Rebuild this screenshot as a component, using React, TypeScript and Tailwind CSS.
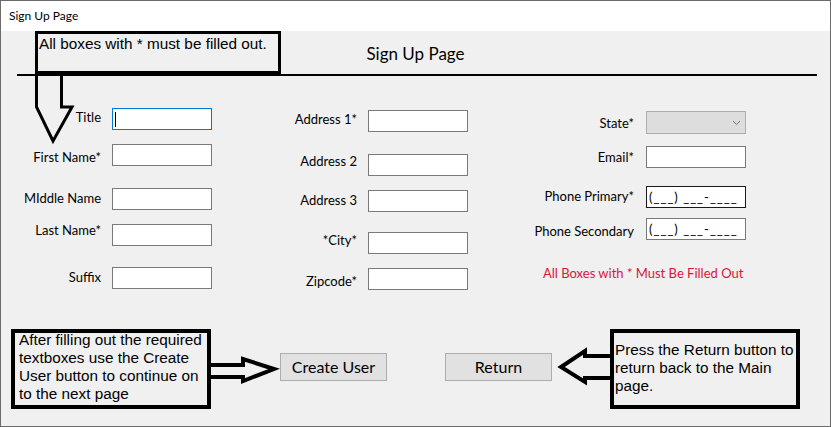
import React from "react"

type Row = { label: string; rowMt: string; labelMt: string; kind?: "focus" | "combo" | "mask" | "maskDark" }

const leftRows: Row[] = [
    { label: "Title", rowMt: "", labelMt: "mt-[1px]", kind: "focus" },
    { label: "First Name*", rowMt: "mt-[14px]", labelMt: "mt-[5px]" },
    { label: "MIddle Name", rowMt: "mt-[22px]", labelMt: "mt-[2px]" },
    { label: "Last Name*", rowMt: "mt-[14px]", labelMt: "mt-[-2px]" },
    { label: "Suffix", rowMt: "mt-[21px]", labelMt: "mt-[2px]" },
]

const midRows: Row[] = [
    { label: "Address 1*", rowMt: "", labelMt: "mt-[1px]" },
    { label: "Address 2", rowMt: "mt-[22px]", labelMt: "mt-[-1px]" },
    { label: "Address 3", rowMt: "mt-[14px]", labelMt: "mt-[2px]" },
    { label: "*City*", rowMt: "mt-[20px]", labelMt: "mt-[0px]" },
    { label: "Zipcode*", rowMt: "mt-[14px]", labelMt: "mt-[5px]" },
]

const rightRows: Row[] = [
    { label: "State*", rowMt: "", labelMt: "mt-[4px]", kind: "combo" },
    { label: "Email*", rowMt: "mt-[12px]", labelMt: "mt-[3px]" },
    { label: "Phone Primary*", rowMt: "mt-[18px]", labelMt: "mt-[2px]", kind: "maskDark" },
    { label: "Phone Secondary", rowMt: "mt-[10px]", labelMt: "mt-[5px]", kind: "mask" },
]

function Field({ kind }: { kind?: Row["kind"] }) {
    if (kind === "combo") {
        return (
            <div className="w-[100px] h-[23px] bg-[#dddddd] border border-[#adadad] flex items-center justify-end pr-[4px]">
                {/* dropdown chevron */}
                <svg width="9" height="6" viewBox="0 0 9 6">
                    <polyline points="1,1 4.5,4.5 8,1" fill="none" stroke="#707070" strokeWidth="1" />
                </svg>
            </div>
        )
    }
    if (kind === "mask" || kind === "maskDark") {
        return (
            <div
                className={
                    kind === "maskDark"
                        ? "w-[100px] h-[22px] bg-white border border-[#1a1a1a] pl-[2px] text-[13px] leading-[20px] tracking-[1px] whitespace-pre"
                        : "w-[100px] h-[22px] bg-white border border-[#7a7a7a] pl-[2px] text-[13px] leading-[20px] tracking-[1px] whitespace-pre"
                }
            >
                (___) ___-____
            </div>
        )
    }
    if (kind === "focus") {
        return (
            <div className="w-[100px] h-[22px] bg-white border border-[#0078d7]">
                <div className="ml-[2px] mt-[3px] w-[1px] h-[15px] bg-black" />
            </div>
        )
    }
    return <div className="w-[100px] h-[22px] bg-white border border-[#7a7a7a]" />
}

function Column({ rows, labelW, gap }: { rows: Row[]; labelW: string; gap: string }) {
    return (
        <>
            {rows.map((r) => (
                <div key={r.label} className={`flex items-start ${gap} ${r.rowMt}`}>
                    <div className={`${labelW} ${r.labelMt} text-right text-[13px] leading-[16px] whitespace-nowrap`}>{r.label}</div>
                    <Field kind={r.kind} />
                </div>
            ))}
        </>
    )
}

export default function App() {
    return (
        <div className="relative w-[831px] h-[427px] border border-[#6b6b6b] flex flex-col bg-[#f0f0f0] text-black font-['Lato',sans-serif]">
            {/* title bar */}
            <div className="h-[30px] shrink-0 bg-white flex items-center pl-[8px] text-[12px]">Sign Up Page</div>

            {/* client area */}
            <div className="flex-1 flex flex-col">
                <div className="pt-[13px] text-center text-[17px] leading-[20px]">Sign Up Page</div>
                <div className="mt-[10px] ml-[16px] w-[800px] h-[2px] bg-black" />

                <div className="flex items-start mt-[32px]">
                    <div className="ml-[10px] flex flex-col">
                        <Column rows={leftRows} labelW="w-[90px]" gap="gap-[11px]" />
                    </div>
                    <div className="ml-[45px] mt-[2px] flex flex-col">
                        <Column rows={midRows} labelW="w-[100px]" gap="gap-[11px]" />
                    </div>
                    <div className="ml-[56px] mt-[3px] flex flex-col">
                        <Column rows={rightRows} labelW="w-[110px]" gap="gap-[12px]" />
                        <div className="mt-[25px] ml-[19px] text-[13px] leading-[16px] text-[#dc143c] whitespace-nowrap">
                            All Boxes with * Must Be Filled Out
                        </div>
                    </div>
                </div>

                <div className="flex mt-[63px] ml-[279px] gap-[58px]">
                    <button className="w-[107px] h-[28px] bg-[#e1e1e1] border border-[#adadad] text-[16px] leading-[20px]">Create User</button>
                    <button className="w-[107px] h-[28px] bg-[#e1e1e1] border border-[#adadad] text-[16px] leading-[20px]">Return</button>
                </div>
            </div>

            {/* annotation callouts drawn over the form */}
            <div className="absolute left-[34px] top-[30px] w-[246px] h-[43px] border-[3px] border-black pl-[1px] pt-[1px] font-['Liberation_Sans',Arial,sans-serif] text-[15.3px] leading-[18px] whitespace-nowrap">
                All boxes with * must be filled out.
            </div>
            <div className="absolute left-[10px] top-[328px] w-[200px] h-[80px] border-[4px] border-black pl-[4px] font-['Liberation_Sans',Arial,sans-serif] text-[15.3px] leading-[18px] whitespace-nowrap">
                <div className="mt-[-2px]">
                    After filling out the required
                    <br />
                    textboxes use the Create
                    <br />
                    User button to continue on
                    <br />
                    to the next page
                </div>
            </div>
            <div className="absolute left-[609px] top-[328px] w-[190px] h-[80px] border-[4px] border-black pl-[1px] pt-[8px] font-['Liberation_Sans',Arial,sans-serif] text-[15.3px] leading-[18px] whitespace-nowrap">
                Press the Return button to
                <br />
                return back to the Main
                <br />
                page.
            </div>

            <svg className="absolute left-[-1px] top-[-1px] pointer-events-none" width="831" height="427" viewBox="0 0 831 427">
                <polyline points="36.5,75 36.5,107 53,141 72,107 61.5,107 61.5,75" fill="none" stroke="black" strokeWidth="3" />
                <polyline points="210,365 243,365 243,359 274,369 243,381 243,377 210,377" fill="none" stroke="black" strokeWidth="4" />
                <polyline points="612,356 585,356 585,351 561,367 585,382 585,378 612,378" fill="none" stroke="black" strokeWidth="4" />
            </svg>
        </div>
    )
}
